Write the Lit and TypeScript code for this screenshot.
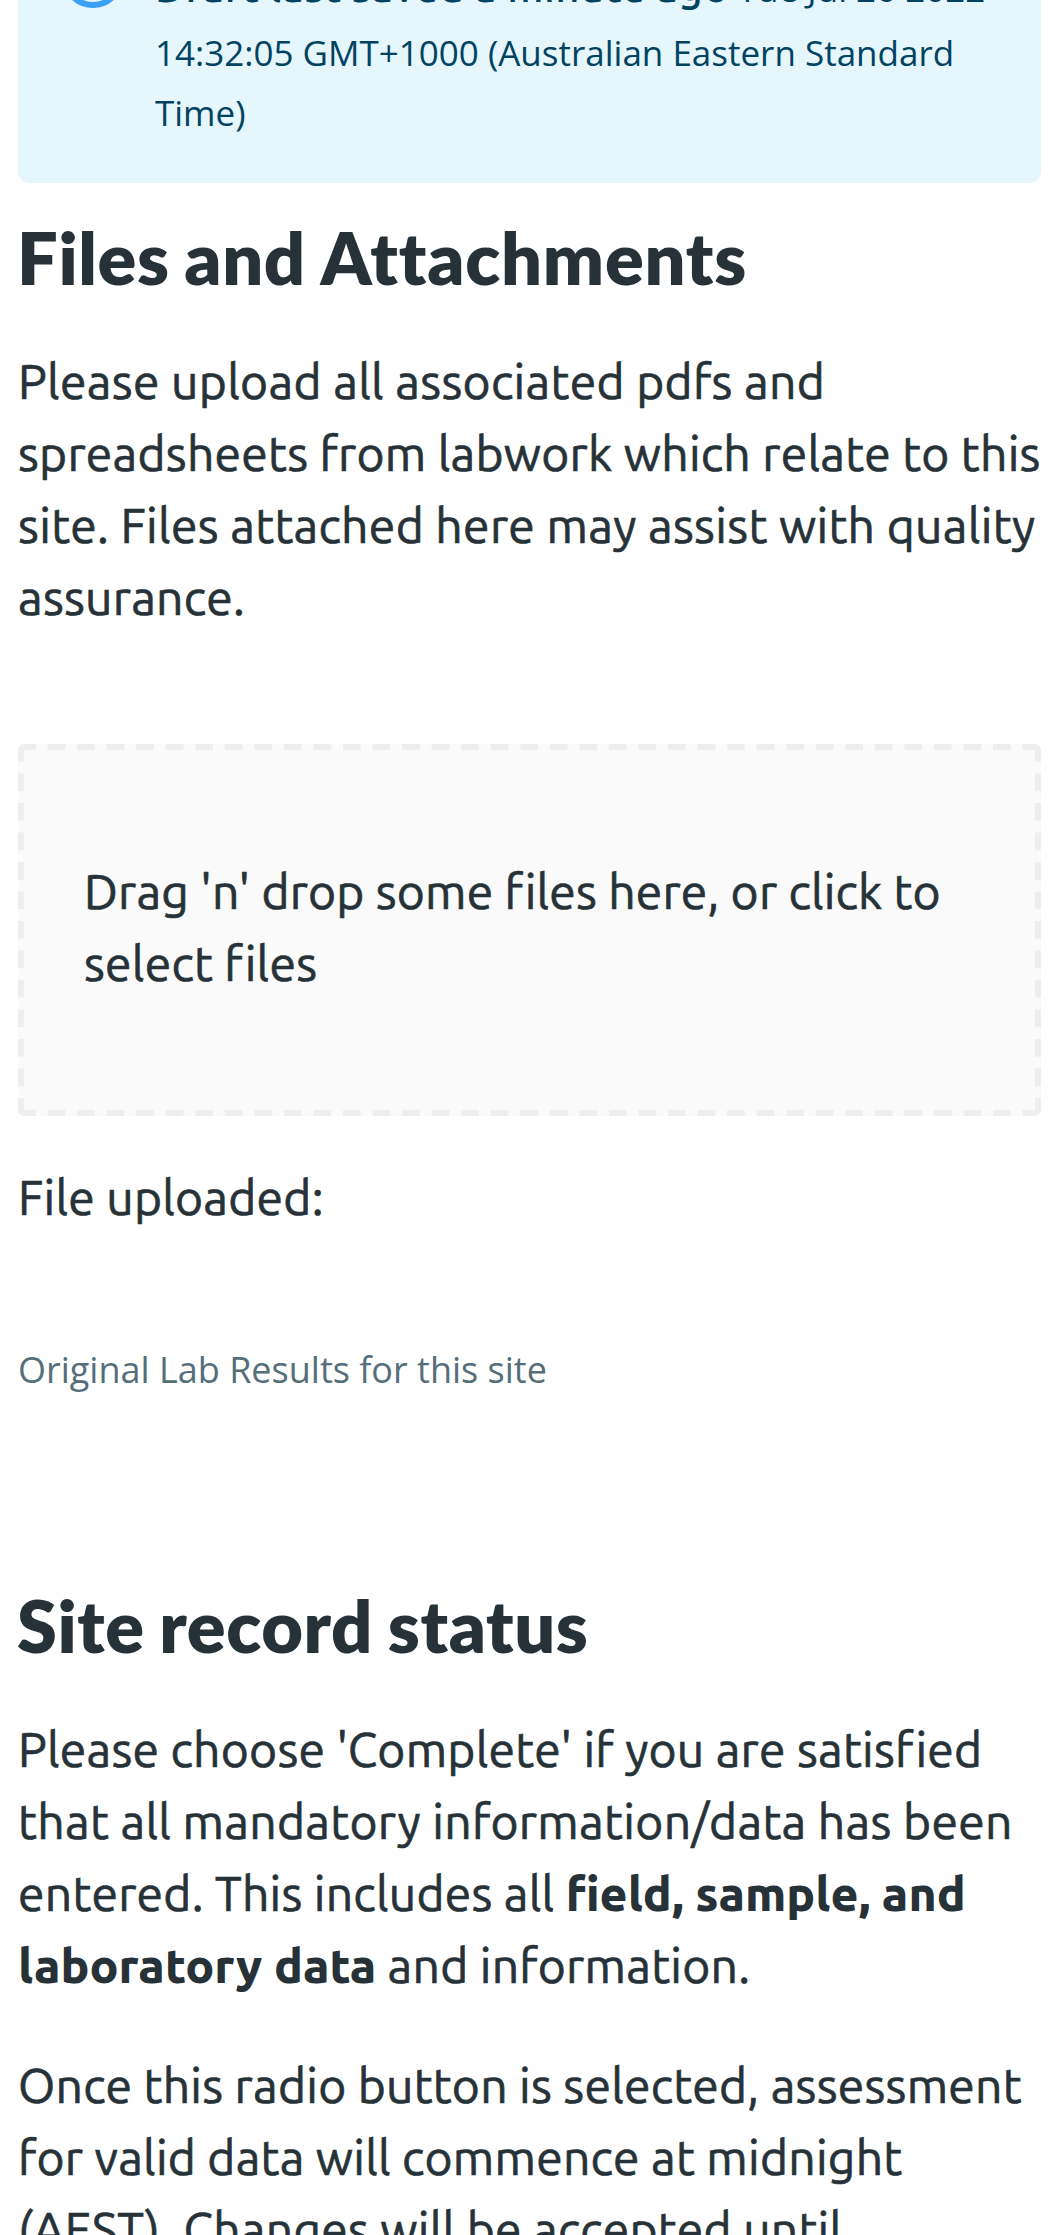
import { LitElement, html, css } from "lit";
import { customElement } from "lit/decorators.js";

@customElement("draft-notice")
export class DraftNotice extends LitElement {
  static styles = css`
    :host { display: flex; box-sizing: border-box; height: 249px; padding: 23px 48px 0 43.5px; gap: 31.5px;
      border-radius: 12px; background: #e5f6fd; color: #014361; }
    .icon { flex: none; width: 62px; height: 62px; margin-top: -11.5px; }
    .text { display: flex; flex-direction: column; font: 35px/60px "Open Sans", sans-serif; white-space: nowrap; }
    .first { height: 66px; }
    strong { font: 500 42px/60px Ubuntu, sans-serif; letter-spacing: 0.42px; }
  `;
  render() {
    return html`
      <svg class="icon" viewBox="0 0 62 62" fill="none" stroke="#399ff7" stroke-width="6">
        <circle cx="31" cy="31" r="28" />
        <path d="M31 28v17M31 17v6" />
      </svg>
      <div class="text">
        <span class="first"><strong>Draft last saved a minute ago</strong> Tue Jul 26 2022</span>
        <span>14:32:05 GMT+1000 (Australian Eastern Standard</span>
        <span>Time)</span>
      </div>
    `;
  }
}

@customElement("app-root")
export class AppRoot extends LitElement {
  static styles = css`
    :host { display: block; height: 2235px; overflow: hidden; background: #fff; color: #263238; }
    .page { display: flex; flex-direction: column; margin-top: -66px; padding: 0 18px;
      font: 400 48px/72px Ubuntu, "Noto Sans", sans-serif; letter-spacing: 0.25px;
      -webkit-text-stroke: 0.7px #263238; white-space: nowrap; }
    draft-notice { -webkit-text-stroke: 0; letter-spacing: 0; }
    p, h2 { margin: 0; }
    h2 { margin: 32px 0 46px -1px; font: 800 72px/84px Lato, sans-serif; letter-spacing: 0.6px;
      word-spacing: -2.5px; -webkit-text-stroke: 0; }
    .spaced { letter-spacing: 0.8px; }
    b { font-weight: 800; letter-spacing: 0; -webkit-text-stroke: 0; }
    .loose { letter-spacing: 0.32px; }
    .tight { letter-spacing: 0.18px; }
    .dropzone { box-sizing: border-box; height: 372px; margin: 111px 0 45px; padding: 111px 66px; border-radius: 6px;
      --h: linear-gradient(to right, #eee 18px, transparent 18px);
      --v: linear-gradient(to bottom, #eee 18px, transparent 18px);
      background: var(--h) 0 0 / 29.559px 6px repeat-x, var(--h) 0 100% / 29.559px 6px repeat-x,
        var(--v) 0 0 / 6px 29.5px repeat-y, var(--v) 100% 0 / 6px 29.5px repeat-y, #fafafa; }
    .hint { margin-top: 112px; font: 36px/50px "Open Sans", sans-serif; letter-spacing: 0; color: #546e7a; -webkit-text-stroke: 0; }
    .status { margin-top: 188px; }
    .next { margin-top: 48px; }
  `;
  render() {
    return html`<main class="page">
      <draft-notice></draft-notice>
      <h2>Files and <span class="spaced">Attachments</span></h2>
      <p><span class="loose">Please upload all associated pdfs and</span><br />spreadsheets from labwork which relate to this<br /><span class="loose">site. Files attached here may assist with quality</span><br />assurance.</p>
      <div class="dropzone"><p><span class="tight">Drag 'n' drop some files here, or click to</span><br />select files</p></div>
      <p>File uploaded:</p>
      <p class="hint">Original Lab Results for this site</p>
      <h2 class="status">Site record status</h2>
      <p>Please choose 'Complete' if you are satisfied<br /><span class="loose">that all mandatory information/data has been</span><br />entered. This includes all <b>field, sample, and</b><br /><b>laboratory data</b> and information.</p>
      <p class="next">Once this radio button is selected, assessment<br />for valid data will commence at midnight<br />(AEST). Changes will be accepted until</p>
    </main>`;
  }
}
